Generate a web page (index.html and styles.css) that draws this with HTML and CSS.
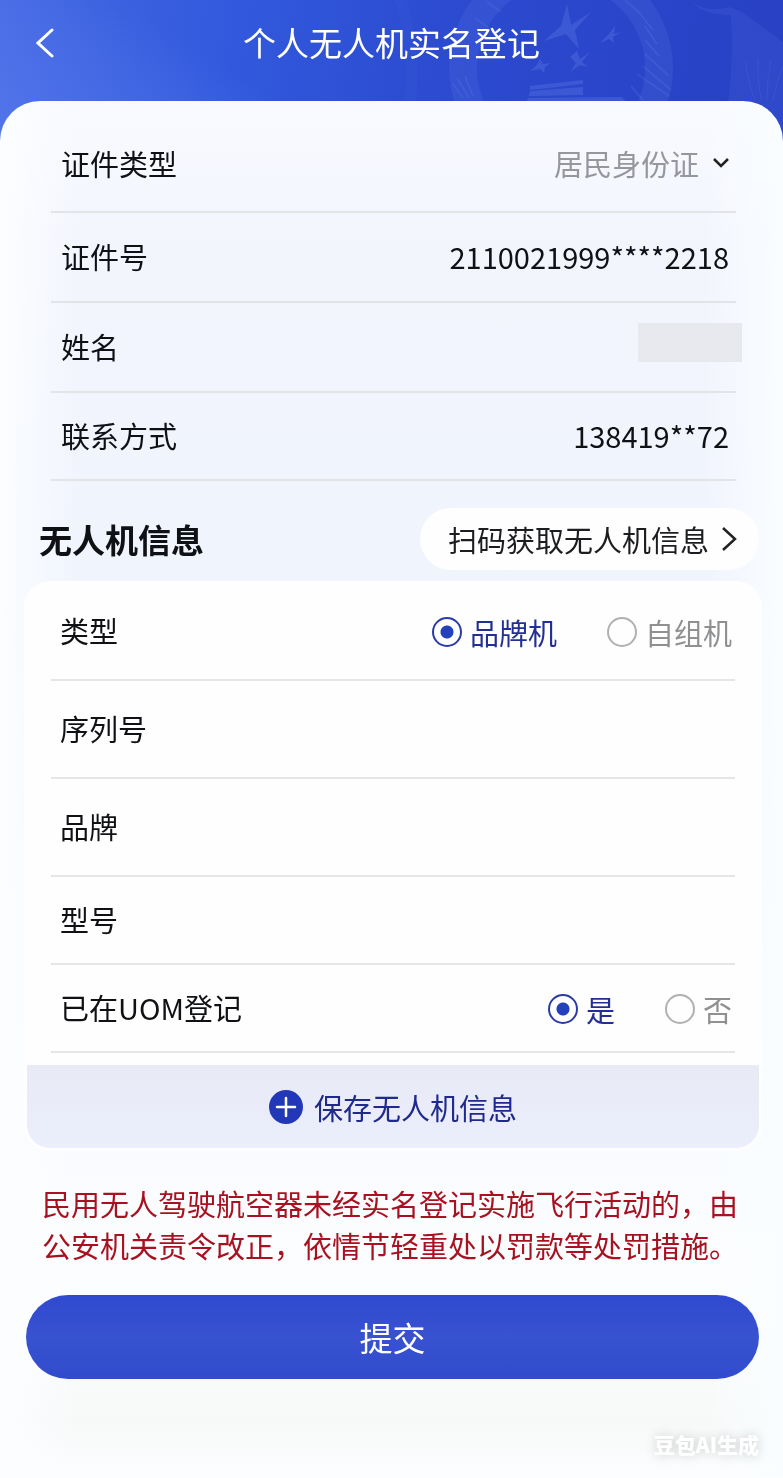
FILE: index.html
```html
<!doctype html>
<html lang="zh-CN">
  <head>
    <title>个人无人机实名登记</title>
    <meta charset="UTF-8">
    <meta name="viewport" content="width=device-width, initial-scale=1">
    <link rel="stylesheet" href="styles.css">
  </head>
  <body>
<header class="top">
  <svg class="emblem" viewBox="0 0 400 141" aria-hidden="true">
    <g fill="none" stroke="#6f8cf0">
      <circle cx="178" cy="68" r="98" stroke-width="28" opacity=".14"/>
      <path d="M70 84l10 14M74 78l12 20M82 76l8 20M92 18l14 10M104 2l14 10M254 74l32 22M260 66l28 24M262 54l24 22M248 86l12 14M262 40l14 16M262 26l12 18M254 10l16 20M242 0l16 14" stroke-width="2" opacity=".18"/>
    </g>
    <g fill="#6f8cf0" opacity=".26">
      <path d="M184 4l4 21 20-13-16 18 4 19-13-15-22 7 17-15z"/>
      <path d="M232 26l-1 8 7-2-8 5 1 6-5-4-9 4 8-8z"/>
      <path d="M194 51l3 8 10-7-8 10 6 5-8-2-10 7 6-9-6-6z"/>
      <path d="M157 59l3 5 8-1-6 4-1 6-4-4-10 2 6-5z"/>
      <path d="M147 86l53-6v4l-53 6zM147 91l53-4v8l-54 1zM145 98l94-1 4 5H144z"/>
    </g>
    <g fill="#6f8cf0" opacity=".12">
      <path d="M308 0q12 14 39 7l12 5 41 30v99h-62q14-60 10-126-30 0-40-15z"/>
      <path d="M12 141q22-65 0-141h12q20 76 2 141z" opacity=".5"/>
    </g>
    <g fill="none" stroke="#6f8cf0" opacity=".15">
      <path d="M372 100q-8-20-9-38M378 100q-4-20-3-42M384 100q0-22 4-40M390 100q4-20 10-34"/>
    </g>
  </svg>
  <button class="back" type="button" aria-label="返回">
    <svg width="18" height="30" viewBox="0 0 18 30"><path d="M16 2L2 15l14 13"/></svg>
  </button>
  <h1>个人无人机实名登记</h1>
</header>

<form class="sheet">
  <div class="owner">
    <div class="row">
      <label for="cert">证件类型</label>
      <div class="select">
        <select id="cert">
          <option>居民身份证</option>
        </select>
        <svg width="16" height="10" viewBox="0 0 16 10"><path d="M1 1l7 7 7-7"/></svg>
      </div>
    </div>
    <div class="row">
      <label for="certno">证件号</label>
      <input id="certno" type="text" value="2110021999****2218" readonly>
    </div>
    <div class="row">
      <span>姓名</span>
      <span class="masked"></span>
    </div>
    <div class="row">
      <label for="phone">联系方式</label>
      <input id="phone" type="text" value="138419**72" readonly>
    </div>
  </div>

  <div class="section">
    <h2>无人机信息</h2>
    <button class="scan" type="button">
      扫码获取无人机信息
      <svg width="16" height="26" viewBox="0 0 16 26"><path d="M2 2l12 11L2 24"/></svg>
    </button>
  </div>

  <div class="card">
    <div class="fields">
      <div class="row tall">
        <span>类型</span>
        <div class="options">
          <label><input type="radio" name="kind" checked><span>品牌机</span></label>
          <label><input type="radio" name="kind"><span>自组机</span></label>
        </div>
      </div>
      <div class="row tall">
        <label for="serial">序列号</label>
        <input id="serial" type="text">
      </div>
      <div class="row tall">
        <label for="brand">品牌</label>
        <input id="brand" type="text">
      </div>
      <div class="row">
        <label for="model">型号</label>
        <input id="model" type="text">
      </div>
      <div class="row">
        <span>已在UOM登记</span>
        <div class="options">
          <label><input type="radio" name="uom" checked><span>是</span></label>
          <label><input type="radio" name="uom"><span>否</span></label>
        </div>
      </div>
    </div>
    <button class="save" type="button">
      <svg width="34" height="34" viewBox="0 0 34 34">
        <circle cx="17" cy="17" r="17" fill="#2238b8"/>
        <path d="M17 8v18M8 17h18" stroke="#fff" stroke-width="2.5" stroke-linecap="round"/>
      </svg>
      保存无人机信息
    </button>
  </div>

  <p class="warning">民用无人驾驶航空器未经实名登记实施飞行活动的，由公安机关责令改正，依情节轻重处以罚款等处罚措施。</p>
  <button class="submit" type="submit">提交</button>
  <div class="watermark">豆包AI生成</div>
</form>
  </body>
</html>
```
FILE: styles.css
```css
* {
  box-sizing: border-box;
}
html, body, button, input, select {
  font-family: "Noto Sans CJK SC", sans-serif;
  font-size: 29px;
  line-height: 42px;
}
body {
  margin: 0;
  color: #101114;
  background: #fbfdfe;
}
button {
  border: 0;
  padding: 0;
  cursor: pointer;
}
svg {
  flex: none;
}

/* header */
.top {
  position: relative;
  height: 141px;
  overflow: hidden;
  color: #fff;
  background:
    linear-gradient(33deg, rgba(120, 150, 255, 0.3), rgba(120, 150, 255, 0.12) 24%, transparent 34%),
    linear-gradient(100deg, #4468e2, #3259dd 30%, #2c4bd0 55%, #2840c4);
}
.emblem {
  position: absolute;
  top: 0;
  right: 0;
  width: 400px;
  height: 141px;
}
.top h1 {
  position: relative;
  margin: 0;
  font-size: 33px;
  font-weight: 400;
  line-height: 84px;
  text-align: center;
}
.back {
  position: absolute;
  z-index: 1;
  top: 22px;
  left: 25px;
  width: 40px;
  height: 42px;
  display: grid;
  place-items: center;
  background: none;
}
.back path {
  fill: none;
  stroke: #fff;
  stroke-width: 3;
  stroke-linecap: round;
}

/* sheet */
.sheet {
  position: relative;
  margin-top: -40px;
  padding: 15px 21px 12px 24px;
  border-radius: 40px 40px 0 0;
  background:
    linear-gradient(90deg, #fbfdff, transparent 10%, transparent 90%, #fafdff),
    linear-gradient(#f8faff, #f3f5fd 150px, #f0f4fd 480px, #f8fafe 980px, #fbfdfe 1200px, #f7f9f9 1320px, #fbfdfe);
}
.owner {
  margin: 0 26px 0 27px;
}
.row {
  display: flex;
  align-items: center;
  justify-content: space-between;
  height: 90px;
  padding: 0 7px 2px 10px;
  border-bottom: 2px solid #e3e4e7;
}
.owner .row:first-child {
  height: 97px;
}
.owner .row:last-child {
  height: 88px;
}
.row input[type=text] {
  flex: 1;
  min-width: 0;
  height: 42px;
  padding: 0;
  border: 0;
  outline: 0;
  color: inherit;
  background: none;
  text-align: right;
}
.select {
  display: flex;
  align-items: center;
  gap: 13px;
}
.select select {
  appearance: none;
  padding: 0;
  border: 0;
  color: #96979c;
  background: none;
}
.select path, .scan path {
  fill: none;
  stroke: #222;
  stroke-width: 2.5;
}
.masked {
  align-self: flex-start;
  width: 104px;
  height: 39px;
  margin: 20px -13px 0 0;
  background: #e8e9ee;
}

/* drone info */
.section {
  display: flex;
  align-items: center;
  justify-content: space-between;
  padding: 27px 3px 11px 15px;
}
.section h2 {
  margin: 0;
  font-size: 33px;
  font-weight: 700;
}
.scan {
  display: flex;
  align-items: center;
  gap: 12px;
  height: 62px;
  padding: 0 22px 0 28px;
  border-radius: 31px;
  color: #1c1d20;
  background: #fefefe;
}
.card {
  padding: 0 3px 3px;
  border-radius: 26px;
  background: #fefefe;
}
.fields {
  padding: 2px 24px 12px;
}
.fields .row {
  height: 88px;
  padding-right: 3px;
  padding-left: 9px;
  border-color: #e5e5e3;
}
.fields .tall {
  height: 98px;
}
.options {
  display: flex;
  gap: 50px;
  padding-top: 4px;
}
.options label {
  display: flex;
  align-items: center;
  gap: 8px;
  color: #8f9092;
}
.options label:has(:checked) {
  color: #232f92;
}
.options input {
  appearance: none;
  width: 30px;
  height: 30px;
  margin: 0;
  border: 2px solid #b0b0b0;
  border-radius: 50%;
}
.options input:checked {
  border-color: #2a3ba6;
  background: radial-gradient(circle, #2540bd 6px, transparent 7px);
}
.save {
  display: flex;
  align-items: center;
  justify-content: center;
  gap: 11px;
  width: 100%;
  height: 83px;
  border-radius: 0 0 23px 23px;
  color: #1f2a8c;
  background: linear-gradient(#e8eaf6, #ebeefb);
}

.warning {
  margin: 31px 0 29px;
  padding: 0 10px 0 18px;
  color: #a81220;
}
.submit {
  display: block;
  width: calc(100% - 5px);
  height: 84px;
  margin: 0 3px 0 2px;
  border-radius: 42px;
  font-size: 33px;
  color: #fff;
  background: linear-gradient(#3049d0, #3852d0 50%, #304bcc);
}
.watermark {
  margin-top: 44px;
  padding-right: 3px;
  font-size: 21px;
  font-weight: 900;
  text-align: right;
  color: #fff;
  text-shadow: 0 0 12px rgba(0, 0, 0, 0.2);
}
```
